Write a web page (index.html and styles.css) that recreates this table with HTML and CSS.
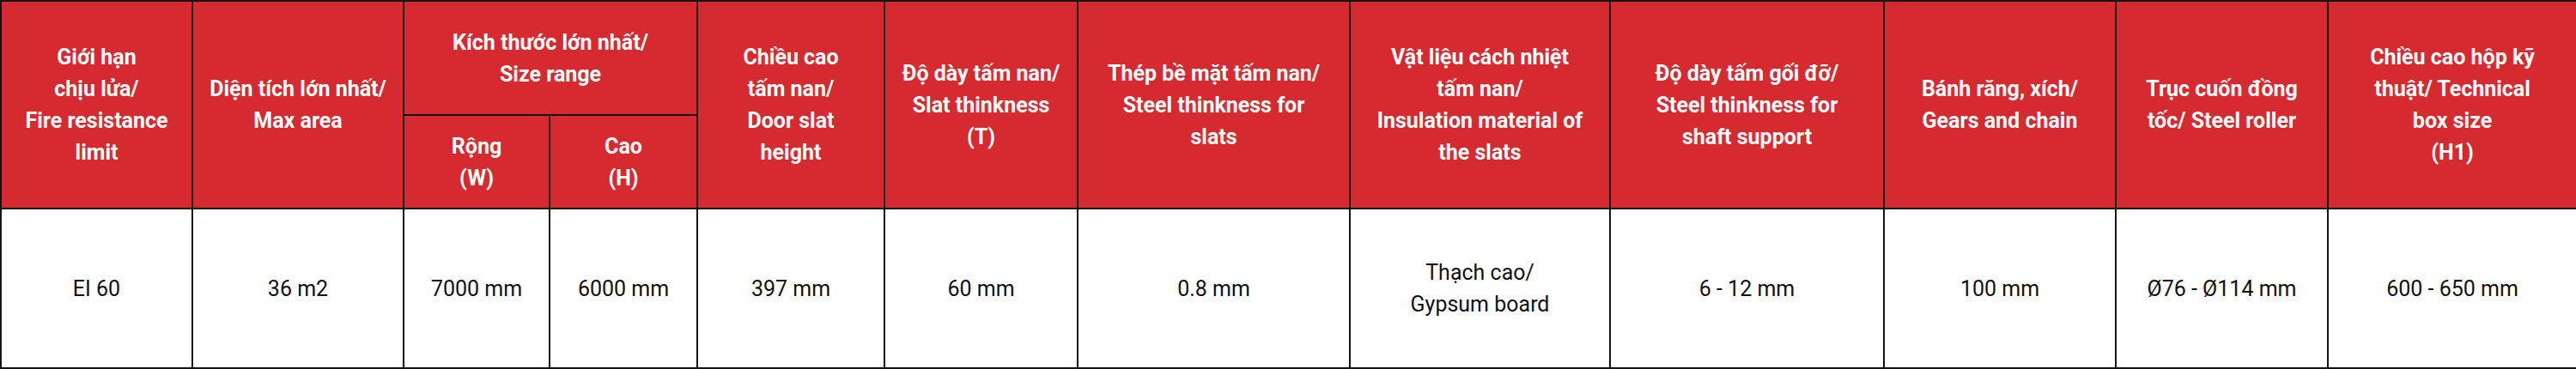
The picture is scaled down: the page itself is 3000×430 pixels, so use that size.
FILE: index.html
```html
<!DOCTYPE html>
<html lang="vi">
<head>
<meta charset="utf-8">
<title>Thông số kỹ thuật</title>
<link rel="stylesheet" href="styles.css">
</head>
<body>
<table class="spec">
  <colgroup>
    <col class="c1"><col class="c2"><col class="c3"><col class="c4"><col class="c5"><col class="c6">
    <col class="c7"><col class="c8"><col class="c9"><col class="c10"><col class="c11"><col class="c12">
  </colgroup>
  <thead>
    <tr class="head-top">
      <th rowspan="2">Giới hạn<br>chịu lửa/<br>Fire resistance<br>limit</th>
      <th rowspan="2">Diện tích lớn nhất/<br>Max area</th>
      <th colspan="2">Kích thước lớn nhất/<br>Size range</th>
      <th rowspan="2">Chiều cao<br>tấm nan/<br>Door slat<br>height</th>
      <th rowspan="2">Độ dày tấm nan/<br>Slat thinkness<br>(T)</th>
      <th rowspan="2">Thép bề mặt tấm nan/<br>Steel thinkness for<br>slats</th>
      <th rowspan="2">Vật liệu cách nhiệt<br>tấm nan/<br>Insulation material of<br>the slats</th>
      <th rowspan="2">Độ dày tấm gối đỡ/<br>Steel thinkness for<br>shaft support</th>
      <th rowspan="2">Bánh răng, xích/<br>Gears and chain</th>
      <th rowspan="2">Trục cuốn đồng<br>tốc/ Steel roller</th>
      <th rowspan="2">Chiều cao hộp kỹ<br>thuật/ Technical<br>box size<br>(H1)</th>
    </tr>
    <tr class="head-sub">
      <th>Rộng<br>(W)</th>
      <th>Cao<br>(H)</th>
    </tr>
  </thead>
  <tbody>
    <tr class="data">
      <td>EI 60</td>
      <td>36 m2</td>
      <td>7000 mm</td>
      <td>6000 mm</td>
      <td>397 mm</td>
      <td>60 mm</td>
      <td>0.8 mm</td>
      <td>Thạch cao/<br>Gypsum board</td>
      <td>6 - 12 mm</td>
      <td>100 mm</td>
      <td>Ø76 - Ø114 mm</td>
      <td>600 - 650 mm</td>
    </tr>
  </tbody>
</table>
</body>
</html>
```
FILE: styles.css
```css
html, body {
  margin: 0;
  padding: 0;
  background: #ffffff;
}

.spec {
  width: 3000px;
  border-collapse: collapse;
  table-layout: fixed;
  font-family: Roboto, "Liberation Sans", Arial, sans-serif;
  font-size: 25px;
  line-height: 37px;
}

.c1 { width: 223px; }
.c2 { width: 246px; }
.c3 { width: 170px; }
.c4 { width: 172px; }
.c5 { width: 218px; }
.c6 { width: 225px; }
.c7 { width: 317px; }
.c8 { width: 303px; }
.c9 { width: 319px; }
.c10 { width: 270px; }
.c11 { width: 247px; }
.c12 { width: 290px; }

.spec th,
.spec td {
  border: 2px solid #141414;
  padding: 0 4px;
  text-align: center;
  vertical-align: middle;
}

.spec th {
  background: #d62a31;
  color: #ffffff;
  font-weight: 700;
}

.spec td {
  background: #ffffff;
  color: #111111;
  font-weight: 400;
}

.head-top { height: 133px; }
.head-sub { height: 109px; }
.data { height: 186px; }
```
